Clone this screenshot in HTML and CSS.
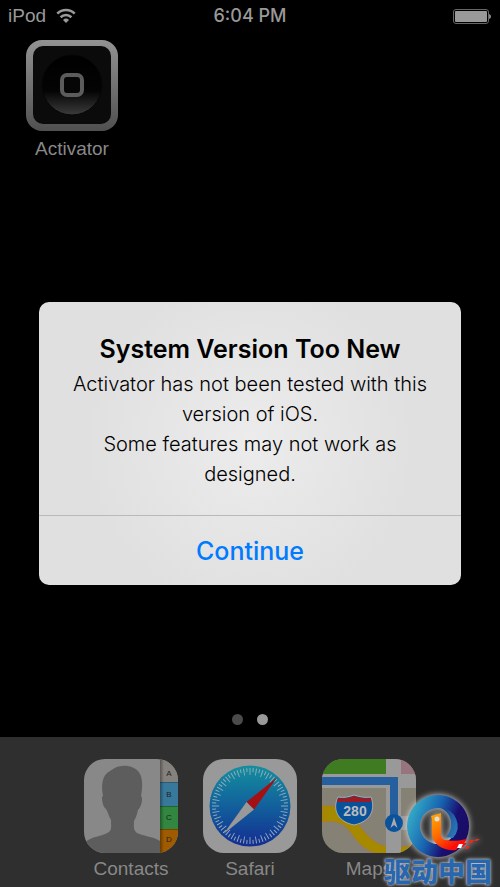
FILE: index.html
```html
<!DOCTYPE html>
<html lang="en">
<head>
    <meta charset="UTF-8">
    <meta name="viewport" content="width=device-width, initial-scale=1.0">
    <title>System Version Too New</title>
    <link rel="stylesheet" href="styles.css">
</head>
<body>
    <header class="status-bar">
        <div class="carrier">
            <span>iPod</span>
            <svg width="20" height="16" viewBox="0 0 20 16" fill="none" stroke="#999" stroke-width="2.6">
                <path d="M1.3 5.6a12.4 12.4 0 0 1 17.4 0"/>
                <path d="M4.6 9.2a7.7 7.7 0 0 1 10.8 0"/>
                <path d="M10 15l-3-3a4.3 4.3 0 0 1 6 0z" fill="#999" stroke="none"/>
            </svg>
        </div>
        <time class="clock">6:04 PM</time>
        <div class="battery">
            <svg width="40" height="16" viewBox="0 0 40 16">
                <rect x="1.5" y="1.5" width="35" height="14" rx="2.5" fill="none" stroke="#666"/>
                <rect x="3" y="3" width="32" height="11" rx="1" fill="#999"/>
                <path d="M37 6c1.500.5 2 1.500 2 2.500s-.5 2-2 2.500z" fill="#888"/>
            </svg>
        </div>
    </header>

    <main class="home">
        <a class="app" href="#activator">
            <svg width="94" height="94" viewBox="0 0 94 94">
                <defs>
                    <linearGradient id="frame" x1="0" y1="0" x2="0" y2="1">
                        <stop offset="0" stop-color="#939393"/>
                        <stop offset="1" stop-color="#505050"/>
                    </linearGradient>
                    <linearGradient id="dish" x1="0" y1="0" x2="0" y2="1">
                        <stop offset="0" stop-color="#000"/>
                        <stop offset=".6" stop-color="#040404"/>
                        <stop offset="1" stop-color="#3c3c3c"/>
                    </linearGradient>
                </defs>
                <rect x="1" y="1" width="92" height="91" rx="16" fill="url(#frame)"/>
                <rect x="8" y="7" width="78" height="78" rx="10" fill="#0b0b0b"/>
                <circle cx="47" cy="46" r="30" fill="url(#dish)" stroke="#060606"/>
                <rect x="37" y="36" width="20" height="20" rx="5" fill="#060606" stroke="#5c5c5c" stroke-width="4"/>
            </svg>
            <span>Activator</span>
        </a>
    </main>

    <div class="page-dots">
        <span class="dot"></span>
        <span class="dot active"></span>
    </div>

    <nav class="dock">
        <a class="app" href="#contacts">
            <svg width="94" height="94" viewBox="0 0 94 94">
                <defs>
                    <clipPath id="tile"><rect width="94" height="94" rx="21"/></clipPath>
                    <linearGradient id="page-edge">
                        <stop offset="0" stop-color="#000" stop-opacity=".35"/>
                        <stop offset="1" stop-color="#000" stop-opacity="0"/>
                    </linearGradient>
                </defs>
                <g clip-path="url(#tile)">
                    <rect width="94" height="94" fill="#888"/>
                    <path d="M0 84C7 77 20 77 25 73c3-2 2-7 2-12-2-3-3-8-5-11-3-2-4-8-4-12l1-1c-2-11-1-21 7-25 3-2 7-5 12-5 7-1 12 2 15 4 6 5 6 16 4 26 2 1 1 10-3 14-1 4-2 8-4 11 0 5-1 9 3 12 6 3 18 4 23 8v12H0z" fill="#5d5d5d"/>
                    <rect x="76" width="18" height="23" fill="#85817d"/>
                    <rect x="76" y="23" width="18" height="24" fill="#38799b"/>
                    <rect x="76" y="47" width="18" height="23" fill="#31873f"/>
                    <rect x="76" y="70" width="18" height="24" fill="#a05b00"/>
                    <path d="M76 23.5h18M76 47.5h18M76 70.5h18" stroke="#000" stroke-opacity=".25"/>
                    <rect x="76" width="4" height="94" fill="url(#page-edge)"/>
                    <g class="tab-letter">
                        <text x="85" y="17">A</text>
                        <text x="85" y="38">B</text>
                        <text x="85" y="61">C</text>
                        <text x="85" y="83">D</text>
                    </g>
                </g>
            </svg>
            <span>Contacts</span>
        </a>
        <a class="app" href="#safari">
            <svg width="94" height="94" viewBox="0 0 94 94">
                <defs>
                    <linearGradient id="compass" x1="0" y1="0" x2="0" y2="1">
                        <stop offset="0" stop-color="#148f9e"/>
                        <stop offset=".5" stop-color="#12609c"/>
                        <stop offset="1" stop-color="#142c92"/>
                    </linearGradient>
                </defs>
                <rect width="94" height="94" rx="21" fill="#999"/>
                <circle cx="47" cy="47" r="40.5" fill="url(#compass)"/>
                <g fill="none" stroke="#8faab8">
                    <circle cx="47" cy="47" r="34.5" stroke-width="7" pathLength="360" stroke-dasharray="1.6 8.4" stroke-dashoffset=".8"/>
                    <circle cx="47" cy="47" r="36" stroke-width="4" pathLength="360" stroke-dasharray="1.6 8.4" stroke-dashoffset="-4.2"/>
                </g>
                <path d="M74 18.5 43.5 43l7.5 7.500z" fill="#a41013"/>
                <path d="M20.5 75 43.5 43l7.5 7.500z" fill="#999"/>
            </svg>
            <span>Safari</span>
        </a>
        <a class="app" href="#maps">
            <svg width="94" height="94" viewBox="0 0 94 94">
                <g clip-path="url(#tile)">
                    <rect width="94" height="94" fill="#868175"/>
                    <rect width="64" height="15" fill="#3f7b21"/>
                    <rect x="79" width="15" height="15" fill="#98757e"/>
                    <path d="M0 15h94v14H0z" fill="#999"/>
                    <path d="M0 47c20-1 26 4 34 15s17 24 33 26c9 1 20 0 27-4v10H53C36 88 32 76 24 68 17 62 11 62 0 63z" fill="#a58a00" stroke="#ad7832"/>
                    <path d="M64 0h15v94H64z" fill="#999"/>
                    <path d="M79 57h15v14H79z" fill="#999"/>
                    <path d="M0 22h72v38" fill="none" stroke="#265f9d" stroke-width="8"/>
                    <path d="M16 38c6 1 11 0 16-2 6 2 11 3 17 2 4 10 2 24-17 28-19-4-21-18-16-28z" fill="#08529c" stroke="#aaa"/>
                    <path d="M16 39c6 1 11 0 16-2 6 2 11 3 17 2v4H15z" fill="#9c1a20"/>
                    <text class="route" x="33" y="57">280</text>
                    <circle cx="72" cy="64" r="9" fill="#0a529b"/>
                    <path d="M72 58l3.5 11-3.5-3-3.500 3z" fill="#aaa"/>
                </g>
            </svg>
            <span>Maps</span>
        </a>
    </nav>

    <div class="overlay">
        <section class="alert" role="alertdialog" aria-labelledby="alert-title" aria-describedby="alert-text">
            <div class="alert-body">
                <h1 id="alert-title">System Version Too New</h1>
                <p id="alert-text">Activator has not been tested with this version of iOS.<br>Some features may not work as designed.</p>
            </div>
            <button class="btn-continue" type="button">Continue</button>
        </section>
    </div>

    <div class="watermark">
        <svg width="64" height="68" viewBox="0 0 64 68">
            <defs>
                <linearGradient id="ring" x1="0" y1=".3" x2="1" y2=".7">
                    <stop offset="0" stop-color="#35b0c9"/>
                    <stop offset=".42" stop-color="#1862b0"/>
                    <stop offset=".7" stop-color="#1a0f70"/>
                    <stop offset="1" stop-color="#180b62"/>
                </linearGradient>
                <linearGradient id="ring-inner" x1="0" y1="0" x2="1" y2="1">
                    <stop offset="0" stop-color="#15408f"/>
                    <stop offset="1" stop-color="#2d80bc"/>
                </linearGradient>
                <linearGradient id="swoosh" x1="0" y1="0" x2=".7" y2="1">
                    <stop offset="0" stop-color="#ffb000"/>
                    <stop offset=".5" stop-color="#ff6900"/>
                    <stop offset=".9" stop-color="#fa0d0b"/>
                </linearGradient>
            </defs>
            <path d="M32 3a31 31 0 1 0 .1 0zM32 16a18 18 0 1 1-.1 0z" fill="url(#ring)" fill-rule="evenodd"/>
            <path d="M35 16a18 18 0 0 1 12 30l-7-1c8-8 7-23-5-29z" fill="url(#ring-inner)"/>
            <path d="M25 24l10-3v21c0 4 2 6 6 6 7 2 14 0 20-1l-3 4 3 0-4 4-4 0-3 3c-6 1-13-1-17-4-5-4-7-8-7-13V27z" fill="url(#swoosh)"/>
            <circle cx="31" cy="27" r="2.5" fill="#ddd"/>
            <path d="M51 56l2-4h4l-2 4z" fill="#fff"/>
            <path d="M62 51l2-3h4l-2 3zM59 57l2-3h3l-2 3zM68 49l2-2h4l-3 2z" fill="#f3261c"/>
        </svg>
        <span lang="zh-CN">驱动中国</span>
    </div>
</body>
</html>
```

FILE: styles.css
```css
* {
    box-sizing: border-box;
}

body {
    display: flex;
    flex-direction: column;
    min-height: 100vh;
    margin: 0;
    font-family: "Liberation Sans", Arial, sans-serif;
    font-size: 19px;
    line-height: 24px;
    background: #000;
    color: #999;
}

.status-bar {
    display: grid;
    grid-template-columns: 1fr auto 1fr;
    align-items: center;
    height: 32px;
    padding: 0 8px;
}

.carrier {
    display: flex;
    align-items: center;
    gap: 10px;
}

.clock {
    font-family: Inter, "Liberation Sans", sans-serif;
    font-size: 18px;
    font-weight: 500;
}

.battery {
    display: flex;
    justify-content: flex-end;
}

.home {
    display: flex;
    flex: 1;
    align-items: flex-start;
    padding: 7px 25px;
}

.app {
    display: flex;
    flex-direction: column;
    align-items: center;
    width: 94px;
    gap: 4px;
    color: #888;
    text-decoration: none;
}

.app svg {
    display: block;
}

.page-dots {
    display: flex;
    justify-content: center;
    gap: 14px;
    padding-bottom: 12px;
}

.dot {
    width: 11px;
    height: 11px;
    border-radius: 50%;
    background: #4b4b4b;
}

.dot.active {
    background: #999;
}

.dock {
    display: flex;
    justify-content: center;
    gap: 25px;
    height: 150px;
    padding-top: 22px;
    background: #2f2f2f;
}

.tab-letter {
    font-size: 8px;
    text-anchor: middle;
    fill: #222;
}

.route {
    font-size: 14px;
    font-weight: bold;
    text-anchor: middle;
    fill: #bbb;
}

.overlay {
    position: absolute;
    inset: 0;
    display: flex;
    align-items: center;
    justify-content: center;
    padding: 0 39px;
}

.alert {
    width: 100%;
    max-width: 422px;
    overflow: hidden;
    border-radius: 10px;
    background: radial-gradient(circle, #ececec 0%, #e0e0e0 65%);
    color: #000;
    font-family: Inter, "Liberation Sans", sans-serif;
    text-align: center;
}

.alert-body {
    padding: 27px 24px 26px;
}

.alert h1 {
    margin: 0;
    font-size: 25px;
    font-weight: 600;
    line-height: 40px;
}

.alert p {
    margin: 0;
    font-size: 20px;
    font-weight: 300;
    line-height: 30px;
}

.btn-continue {
    display: block;
    width: 100%;
    height: 70px;
    border: none;
    border-top: 1px solid #b9b9b9;
    background: none;
    color: #007aff;
    font-family: inherit;
    font-size: 25px;
    font-weight: 500;
    cursor: pointer;
}

.watermark {
    position: absolute;
    right: 8px;
    bottom: 5px;
    display: flex;
    flex-direction: column;
    align-items: center;
    color: #2866ae;
    font-family: "Noto Sans CJK SC", sans-serif;
    font-size: 27px;
    font-weight: 900;
    line-height: 22px;
    text-shadow: 0 0 2px #ddd, 0 0 4px #aaa;
}

.watermark svg {
    overflow: visible;
    filter: drop-shadow(0 0 3px #ddd);
}
```
